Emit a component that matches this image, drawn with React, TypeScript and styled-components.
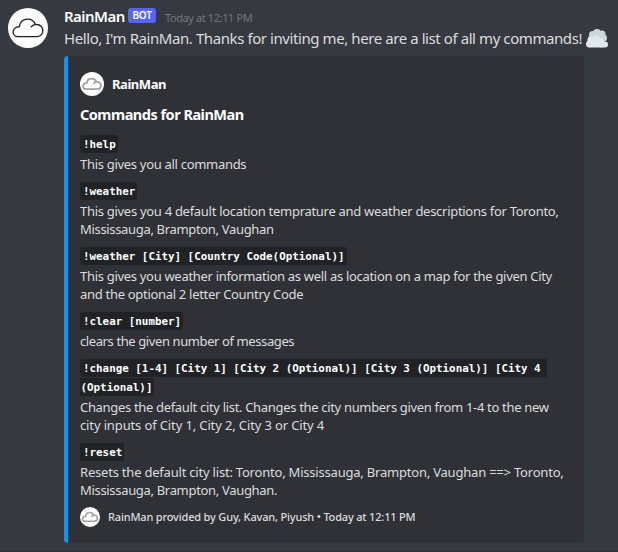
import React from "react";
import styled, { createGlobalStyle } from "styled-components";

const Global = createGlobalStyle`
  * { box-sizing: border-box; }
  html, body { margin: 0; padding: 0; background: #36393f; }
  body { font-family: "Noto Sans", "Open Sans", sans-serif; overflow: hidden; }
`;

const Message = styled.article`
  width: 618px;
  height: 552px;
  display: grid;
  grid-template-columns: 40px 1fr;
  column-gap: 16px;
  align-content: start;
  padding: 6px 0 0 8px;
  border-bottom: 1px solid #382f3b;
  background: #36393f;
  color: #dcddde;
`;

const Avatar = styled.div<{ $size: number }>`
  width: ${(p) => p.$size}px;
  height: ${(p) => p.$size}px;
  flex: none;
  border-radius: 50%;
  background: #fff;
  overflow: hidden;
  svg { display: block; width: 100%; height: 100%; }
`;

const AvatarCell = styled.div`
  padding-top: 2px;
`;

const Header = styled.header`
  display: flex;
  height: 21px;
  align-items: center;
`;

const Line = styled.span<{ $track?: number }>`
  display: block;
  width: max-content;
  white-space: pre;
  letter-spacing: ${(p) => p.$track ?? 0}px;
`;

const Username = styled(Line)`
  width: 60px;
  color: #fff;
  font-size: 15px;
  font-weight: 600;
  line-height: 21px;
`;

const BotTag = styled.span`
  width: 28px;
  height: 15px;
  margin: -2px 0 0 4px;
  border-radius: 3px;
  background: #5865f2;
  color: #fff;
  font-size: 10px;
  font-weight: 600;
  line-height: 15px;
  text-align: center;
  letter-spacing: -0.2px;
`;

const Time = styled(Line)`
  margin: 3px 0 0 9px;
  color: #72767d;
  font-size: 11px;
  line-height: 20px;
`;

const Content = styled.div`
  display: flex;
  height: 23px;
  font-size: 15px;
  line-height: 22px;
`;

const Emoji = styled.svg`
  flex: none;
  width: 22px;
  height: 22px;
  margin: 1px 0 0 4px;
`;

const Embed = styled.section`
  width: 520px;
  height: 487px;
  margin-top: 6px;
  padding: 16px 16px 16px 12px;
  border-left: 4px solid #0099ff;
  border-radius: 4px;
  background: #2f3136;
`;

const Author = styled.div`
  display: flex;
  gap: 8px;
  align-items: center;
  height: 24px;
  color: #fff;
  font-size: 13px;
  font-weight: 700;
`;

const Title = styled.h2`
  height: 22px;
  margin: 7px 0 10px;
  color: #fff;
  font-size: 14.5px;
  font-weight: 700;
  line-height: 22px;
`;

const Field = styled.div`
  margin-bottom: 9px;
`;

const FieldName = styled.div`
  display: flex;
  flex-direction: column;
  gap: 1px;
  align-items: flex-start;
  margin-bottom: 2px;
`;

const Code = styled.code<{ $part?: "start" | "end" }>`
  height: 18px;
  padding: 0 ${(p) => (p.$part === "start" ? 6 : 2)}px 0 ${(p) => (p.$part === "end" ? 0.5 : 3)}px;
  border-radius: ${(p) => (p.$part === "start" ? "3px 0 0 3px" : p.$part === "end" ? "0 3px 3px 0" : "3px")};
  background: #202225;
  color: #fff;
  font-family: "DejaVu Sans Mono", monospace;
  font-size: 10.86px;
  font-weight: 700;
  line-height: 19px;
  white-space: pre;
`;

const FieldValue = styled.div`
  font-size: 13px;
  line-height: 18px;
`;

const Footer = styled.footer`
  display: flex;
  gap: 8px;
  align-items: center;
  height: 20px;
  margin-top: -1px;
  font-size: 11px;
  font-weight: 500;
  line-height: 20px;
`;

const Cloud = ({ stroke, color }: { stroke: number; color: string }) => (
  <svg viewBox="0 0 40 40" fill="none" stroke={color} strokeWidth={stroke} strokeLinecap="round" strokeLinejoin="round">
    <path d="M10.100 28.600h19.500a5.800 5.800 0 0 0 5.200-6c0-3.500-2.600-6.100-6-6.100a6 6 0 0 0-5.600 2.300M27.400 16.500c-1.300-3.500-4.200-5.400-7.800-5.400-4.600 0-8 3.100-8.300 7.600-3.700 0-6.200 2.200-6.200 5.200 0 2.600 2.100 4.700 5 4.700" />
  </svg>
);

interface Text { text: string; track: number }
const fields: { names: string[]; values: Text[] }[] = [
  { names: ["!help"], values: [{ text: "This gives you all commands", track: -0.3 }] },
  {
    names: ["!weather"],
    values: [
      { text: "This gives you 4 default location temprature and weather descriptions for Toronto,", track: -0.29 },
      { text: "Mississauga, Brampton, Vaughan", track: -0.33 },
    ],
  },
  {
    names: ["!weather [City] [Country Code(Optional)]"],
    values: [
      { text: "This gives you weather information as well as location on a map for the given City", track: -0.305 },
      { text: "and the optional 2 letter Country Code", track: -0.3 },
    ],
  },
  { names: ["!clear [number]"], values: [{ text: "clears the given number of messages", track: -0.4 }] },
  {
    names: ["!change [1-4] [City 1] [City 2 (Optional)] [City 3 (Optional)] [City 4", "(Optional)]"],
    values: [
      { text: "Changes the default city list. Changes the city numbers given from 1-4 to the new", track: -0.325 },
      { text: "city inputs of City 1, City 2, City 3 or City 4", track: -0.13 },
    ],
  },
  {
    names: ["!reset"],
    values: [
      { text: "Resets the default city list: Toronto, Mississauga, Brampton, Vaughan ==> Toronto,", track: -0.207 },
      { text: "Mississauga, Brampton, Vaughan.", track: -0.32 },
    ],
  },
];

export default function App() {
  return (
    <>
      <Global />
      <Message>
        <AvatarCell>
          <Avatar $size={40}><Cloud stroke={1.4} color="#222" /></Avatar>
        </AvatarCell>
        <div>
          <Header>
            <Username $track={-0.55}>RainMan</Username>
            <BotTag>BOT</BotTag>
            <Time $track={-0.4}>Today at 12:11 PM</Time>
          </Header>
          <Content>
            <Line $track={-0.42}>Hello, I'm RainMan. Thanks for inviting me, here are a list of all my commands!</Line>
            <Emoji viewBox="0 0 22 22">
              <g fill="#ccd6dd">
                <circle cx="11" cy="5" r="4" />
                <circle cx="6.500" cy="6.500" r="3.500" />
                <circle cx="16" cy="6" r="3.500" />
                <circle cx="17.500" cy="10" r="3.500" />
                <circle cx="5.500" cy="10.500" r="3.200" />
                <rect x="6" y="6" width="11" height="8" />
              </g>
              <g fill="#e1e8ed">
                <circle cx="10" cy="11.500" r="4" />
                <circle cx="5" cy="12" r="3.600" />
                <circle cx="3.500" cy="16" r="3.500" />
                <circle cx="14.500" cy="14" r="3.800" />
                <rect x="3.500" y="12.500" width="12" height="7" />
                <rect x="12" y="13.500" width="10" height="6" rx="3" />
              </g>
            </Emoji>
          </Content>
          <Embed>
            <Author>
              <Avatar $size={24}><Cloud stroke={3} color="#a0a0a0" /></Avatar>
              <Line $track={-0.45}>RainMan</Line>
            </Author>
            <Title><Line $track={-0.5}>Commands for RainMan</Line></Title>
            {fields.map((f) => (
              <Field key={f.names[0]}>
                <FieldName>
                  {f.names.map((n, i) => (
                    <Code key={n} $part={f.names.length === 1 ? undefined : i === 0 ? "start" : "end"}>{n}</Code>
                  ))}
                </FieldName>
                <FieldValue>
                  {f.values.map((v) => <Line key={v.text} $track={v.track}>{v.text}</Line>)}
                </FieldValue>
              </Field>
            ))}
            <Footer>
              <Avatar $size={20}><Cloud stroke={3} color="#a0a0a0" /></Avatar>
              <Line $track={-0.175}>RainMan provided by Guy, Kavan, Piyush • Today at 12:11 PM</Line>
            </Footer>
          </Embed>
        </div>
      </Message>
    </>
  );
}
